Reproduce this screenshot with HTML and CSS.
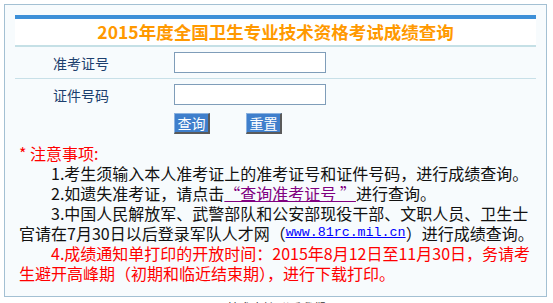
FILE: index.html
```html
<!DOCTYPE html>
<html lang="zh-CN">
  <head>
    <meta charset="UTF-8" />
    <title>2015年度全国卫生专业技术资格考试成绩查询</title>
    <link rel="stylesheet" href="styles.css">
  </head>
  <body>
    <div class="box">
      <div class="kop">2015年度全国卫生专业技术资格考试成绩查询</div>
      <form class="skema">
        <div class="raekke linje">
          <label>准考证号</label>
          <input type="text" />
        </div>
        <div class="raekke">
          <label>证件号码</label>
          <input type="text" />
        </div>
        <div class="knapper">
          <button type="button">查询</button>
          <button type="reset">重置</button>
        </div>
      </form>
      <div class="noter">
        <p class="rod">* 注意事项:</p>
        <p class="ind">1.考生须输入本人准考证上的准考证号和证件号码，进行成绩查询。</p>
        <p class="ind">2.如遗失准考证，请点击<a href="#" class="lilla">“查询准考证号 ”</a>进行查询。</p>
        <p class="ind">3.中国人民解放军、武警部队和公安部现役干部、文职人员、卫生士<br>官请在7月30日以后登录军队人才网（<a href="#" class="bla">www.81rc.mil.cn</a>）进行成绩查询。</p>
        <p class="ind rod">4.成绩通知单打印的开放时间：2015年8月12日至11月30日，务请考<br>生避开高峰期（初期和临近结束期），进行下载打印。</p>
      </div>
    </div>
    <div class="fod">技术支持 联系我们</div>
  </body>
</html>
```

FILE: styles.css
```css
body {
  margin: 0;
  padding: 4px;
  font-family: "Noto Sans CJK SC", sans-serif;
  background-color: white;
}
.box {
  width: 521px;
  border: 1px solid #a3c0d3;
  background-color: #f7fbfd;
  padding: 10px 10px 13px;
}
.kop {
  border-top: 4px solid #3d90d8;
  border-bottom: 2px solid #c5e0e6;
  background-color: white;
  height: 26px;
  line-height: 26px;
  text-align: center;
  color: #ff9900;
  font-size: 17.5px;
  font-weight: bold;
}

/*skema*/
.raekke {
  display: flex;
  align-items: center;
  height: 31px;
}
.linje {
  border-bottom: 1px solid #c8e0e8;
}
.raekke label {
  width: 121px;
  padding-left: 38px;
  font-size: 14px;
  color: #1c3f6e;
}
.raekke input {
  width: 152px;
  height: 21px;
  box-sizing: border-box;
  border: 1px solid #7f9db9;
  background-color: white;
  margin: 0;
}
.knapper {
  display: flex;
  gap: 36px;
  padding: 3px 0 0 159px;
  height: 25px;
}
.knapper button {
  width: 36px;
  height: 21px;
  padding: 0;
  margin: 0;
  border-style: solid;
  border-width: 1px 2px 2px 1px;
  border-color: #8bb2e0 #5a5a5a #5a5a5a #8bb2e0;
  background-color: #3f7fcc;
  color: white;
  font-family: "Noto Sans CJK SC", sans-serif;
  font-size: 14px;
  line-height: 18px;
}

/*noter*/
.noter {
  margin: 5px 0 0 4px;
  font-size: 16px;
  line-height: 20px;
  color: #111;
}
.noter p {
  margin: 0;
  white-space: nowrap;
}
.noter a {
  display: inline-block;
  height: 20px;
  line-height: 20px;
  text-indent: 0;
  vertical-align: top;
}
.ind {
  text-indent: 32px;
}
.rod {
  color: #ff0000;
}
.lilla {
  color: #800080;
}
.bla {
  color: #0000ff;
  font-family: "Liberation Mono", monospace;
  font-size: 13.33px;
}
.fod {
  text-align: center;
  font-size: 12px;
  line-height: 14px;
  margin-top: 4px;
  color: #333;
}
```
